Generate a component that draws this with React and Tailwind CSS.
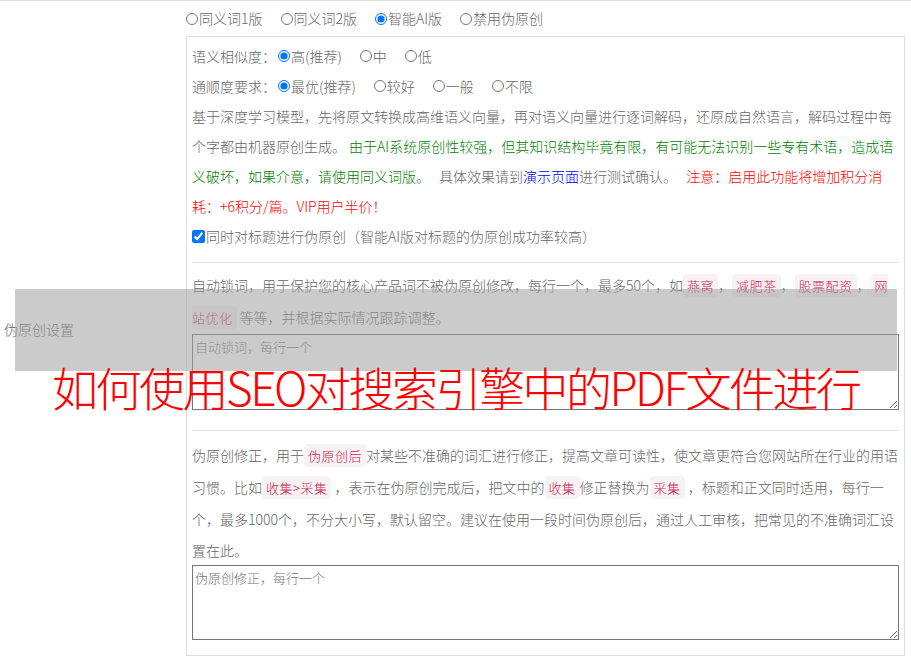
import React from "react";

const font = { fontFamily: '"Noto Sans CJK SC", "Liberation Sans", sans-serif' };

const Radio = ({ label, checked, name }) => (
  <label className="inline-flex items-center mr-[18px]">
    <input
      type="radio"
      name={name}
      defaultChecked={checked}
      className="m-0 mr-px w-[12px] h-[12px]"
    />
    <span>{label}</span>
  </label>
);

const Tag = ({ children }) => (
  <span className="bg-[#f9f2f4] text-[#c7254e] text-[13px] tracking-[0.5px] px-[4px] py-[2px] rounded-[4px]">
    {children}
  </span>
);

export default function App() {
  return (
    <div
      className="relative w-full h-[658px] overflow-hidden bg-white border-t border-[#dddddd] text-[#666666] text-[14px] font-light"
      style={font}
    >
      <div className="flex h-full">
        <div className="w-[186px] shrink-0 flex items-center pl-[4px]">伪原创设置</div>

        <div className="flex-1 pr-[6px]">
          <div className="h-[35px] flex items-center">
            <Radio name="ver" label="同义词1版" />
            <Radio name="ver" label="同义词2版" />
            <Radio name="ver" label="智能AI版" checked />
            <Radio name="ver" label="禁用伪原创" />
          </div>

          <div className="border border-[#dddddd] px-[5px] pt-[4px] pb-[15px]">
            <div className="h-[30px] flex items-center">
              <span className="mr-[2px]">语义相似度：</span>
              <Radio name="sim" label="高(推荐)" checked />
              <Radio name="sim" label="中" />
              <Radio name="sim" label="低" />
            </div>
            <div className="h-[30px] flex items-center">
              <span className="mr-[2px]">通顺度要求：</span>
              <Radio name="flu" label="最优(推荐)" checked />
              <Radio name="flu" label="较好" />
              <Radio name="flu" label="一般" />
              <Radio name="flu" label="不限" />
            </div>

            <p className="leading-[30px]">
              基于深度学习模型，先将原文转换成高维语义向量，再对语义向量进行逐词解码，还原成自然语言，解码过程中每个字都由机器原创生成。{" "}
              <span className="text-[#008000]">
                由于AI系统原创性较强，但其知识结构毕竟有限，有可能无法识别一些专有术语，造成语义破坏，如果介意，请使用同义词版。
              </span>
              <span className="[word-spacing:6px]">
                {" "}具体效果请到<span className="text-[#0000ff]">演示页面</span>进行测试确认。{" "}
              </span>
              <span className="text-[#ff0000]">注意：启用此功能将增加积分消耗：+6积分/篇。VIP用户半价！</span>
            </p>

            <div className="h-[30px] flex items-center">
              <label className="inline-flex items-center">
                <input type="checkbox" defaultChecked className="m-0 mr-px w-[13px] h-[13px]" />
                <span>同时对标题进行伪原创（智能AI版对标题的伪原创成功率较高）</span>
              </label>
            </div>

            <div className="mt-[11px] border-t border-[#e5e5e5]" />

            <p className="mt-[7px] leading-[30.7px]">
              自动锁词，用于保护您的核心产品词不被伪原创修改，每行一个，最多50个，如<Tag>燕窝</Tag>，<Tag>减肥茶</Tag>，<Tag>股票配资</Tag>，<Tag>网站优化</Tag> 等等，并根据实际情况跟踪调整。
            </p>
            <textarea
              placeholder="自动锁词，每行一个"
              className="block mt-[1px] w-full h-[76px] border border-[#767676] p-[2px] text-[13px] placeholder:text-[#757575]"
            />

            <div className="mt-[20px] border-t border-[#e5e5e5]" />

            <p className="mt-[9px] leading-[30.7px]">
              伪原创修正，用于<Tag>伪原创后</Tag>对某些不准确的词汇进行修正，提高文章可读性，使文章更符合您网站所在行业的用语习惯。比如<Tag>收集&gt;采集</Tag> ，表示在伪原创完成后，把文中的<Tag>收集</Tag>修正替换为<Tag>采集</Tag> ，标题和正文同时适用，每行一个，最多1000个，不分大小写，默认留空。建议在使用一段时间伪原创后，通过人工审核，把常见的不准确词汇设置在此。
            </p>
            <textarea
              placeholder="伪原创修正，每行一个"
              className="block w-full h-[75px] border border-[#767676] p-[2px] text-[13px] placeholder:text-[#757575]"
            />
          </div>
        </div>
      </div>

      <div className="absolute left-[15px] top-[288px] w-[882px] h-[82px] bg-[rgba(160,160,160,0.55)]" />
      <div className="absolute left-[52px] top-[362px] text-[46px] tracking-[-2.5px] leading-none text-[#ff0000] whitespace-nowrap">
        如何使用SEO对搜索引擎中的PDF文件进行
      </div>
    </div>
  );
}
